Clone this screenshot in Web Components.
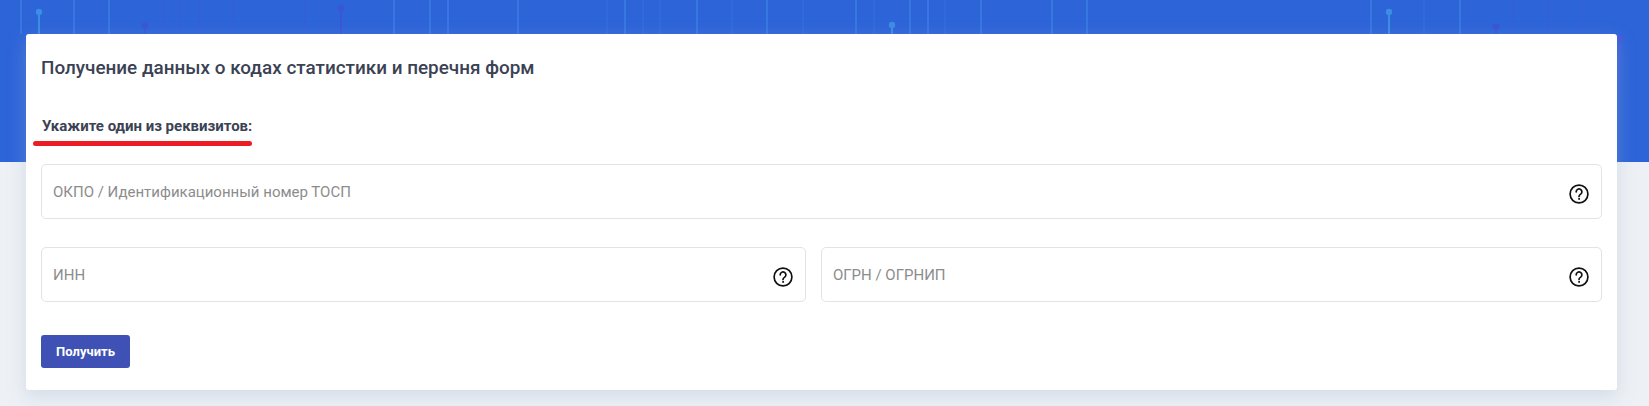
<!DOCTYPE html>
<html lang="ru">
<head>
<meta charset="utf-8">
<title>Получение данных</title>
<style>
  html, body { margin: 0; height: 100%; }
  body { background: #edf1f5; font-family: Roboto, "Liberation Sans", sans-serif; overflow: hidden; }
</style>
</head>
<body>
<stat-page>
  <hero-bg slot="bg"></hero-bg>
  <form-card heading="Получение данных о кодах статистики и перечня форм">
    <marked-label>Укажите один из реквизитов:</marked-label>
    <div slot="rows">
      <help-field>ОКПО / Идентификационный номер ТОСП</help-field>
    </div>
    <div slot="rows">
      <field-pair>
        <help-field>ИНН</help-field>
        <help-field>ОГРН / ОГРНИП</help-field>
      </field-pair>
    </div>
    <submit-button slot="actions">Получить</submit-button>
  </form-card>
</stat-page>

<script>
class StatPage extends HTMLElement {
  constructor() {
    super();
    const shadow = this.attachShadow({ mode: 'open' });
    shadow.innerHTML = `
      <style>
        :host { display: block; position: relative; height: 406px; }
        .content { position: relative; padding: 34px 32px 0 26px; }
      </style>
      <slot name="bg"></slot>
      <div class="content"><slot></slot></div>
    `;
  }
}

// decorative circuit lines behind the card
class HeroBg extends HTMLElement {
  constructor() {
    super();
    const shadow = this.attachShadow({ mode: 'open' });
    const bright = '#3777e0', faint = '#306bdb', purple = '#3360d9';
    const lines = [
      [21, bright], [74, bright], [109, bright], [163, purple], [180, purple], [199, purple],
      [234, purple], [305, purple], [394, bright], [430, bright], [448, bright],
      [518, bright], [607, faint], [625, bright], [643, faint], [660, faint], [697, bright],
      [732, faint], [767, bright], [803, faint], [856, bright], [874, faint], [910, bright],
      [928, bright], [945, faint], [981, bright], [1052, bright], [1087, bright],
      [1371, bright], [1424, faint], [1460, bright], [1514, purple], [1548, purple], [1584, purple]
    ];
    const dots = [[39, 12, '#3c8de4'], [145, 26, '#3a55d6'], [341, 8, '#3a55d6'],
      [892, 25, '#3c8de4'], [1389, 12, '#3c8de4'], [1496, 27, '#3a55d6']];
    const svg = lines.map(([x, c]) => `<rect x="${x - 1}" y="0" width="2" height="34" fill="${c}"/>`).join('')
      + dots.map(([x, y, c]) => `<rect x="${x - 1}" y="${y}" width="2" height="${34 - y}" fill="${c}"/><circle cx="${x}" cy="${y}" r="3.2" fill="${c}"/>`).join('');
    shadow.innerHTML = `
      <style>
        :host { display: block; position: absolute; left: 0; top: 0; right: 0; height: 162px; background: #2d64d8; overflow: hidden; }
        svg { display: block; filter: blur(.5px); }
      </style>
      <svg width="1649" height="162" viewBox="0 0 1649 162">
        <defs><linearGradient id="fade" x1="0" y1="0" x2="0" y2="1"><stop offset="0" stop-color="#4b55e0"/><stop offset="1" stop-color="#2d64d8"/></linearGradient></defs>
        ${svg}
        <rect x="1619" y="38" width="2" height="62" fill="url(#fade)"/>
        <circle cx="1620" cy="38" r="3" fill="#4b55e0"/>
      </svg>
    `;
  }
}

class FormCard extends HTMLElement {
  constructor() {
    super();
    const shadow = this.attachShadow({ mode: 'open' });
    shadow.innerHTML = `
      <style>
        :host {
          display: block;
          background: #fff;
          border-radius: 3px;
          padding: 19px 15px 22px;
          height: 356px;
          box-sizing: border-box;
          box-shadow: 0 6px 18px rgba(160,178,205,0.35);
        }
        h2 { margin: 0; font-size: 18.9px; line-height: 30px; font-weight: 500; color: #3b4254; }
        .label { margin-top: 31px; margin-bottom: 26px; }
        .rows { display: flex; flex-direction: column; gap: 28px; }
        .actions { margin-top: 33px; }
      </style>
      <h2></h2>
      <div class="label"><slot></slot></div>
      <div class="rows"><slot name="rows"></slot></div>
      <div class="actions"><slot name="actions"></slot></div>
    `;
    shadow.querySelector('h2').textContent = this.getAttribute('heading');
  }
}

class MarkedLabel extends HTMLElement {
  constructor() {
    super();
    const shadow = this.attachShadow({ mode: 'open' });
    shadow.innerHTML = `
      <style>
        :host { display: block; position: relative; padding-left: 1px; font-size: 15px; line-height: 24px; font-weight: 700; color: #3b4254; }
        .mark { position: absolute; left: -8px; top: 27px; width: 219px; height: 5px; border-radius: 3px; background: #ec1c24; }
      </style>
      <slot></slot>
      <span class="mark"></span>
    `;
  }
}

class HelpField extends HTMLElement {
  constructor() {
    super();
    const shadow = this.attachShadow({ mode: 'open' });
    shadow.innerHTML = `
      <style>
        :host {
          display: flex;
          align-items: center;
          justify-content: space-between;
          height: 55px;
          box-sizing: border-box;
          padding: 0 12px 0 11px;
          border: 1px solid #e2e3e5;
          border-radius: 5px;
          background: #fff;
          font-size: 15px;
          color: #8c8c8c;
        }
        svg { display: block; margin-top: 5px; }
      </style>
      <span><slot></slot></span>
      <svg width="20" height="20" viewBox="0 0 20 20" fill="none" stroke="#111" stroke-width="1.7" stroke-linecap="round">
        <circle cx="10" cy="10" r="8.9"/>
        <path d="M7.2 7.8a2.85 2.85 0 1 1 4.5 2.3c-1 .7-1.7 1.2-1.7 2.3"/>
        <circle cx="10" cy="14.9" r=".5" fill="#111" stroke-width="1"/>
      </svg>
    `;
  }
}

class FieldPair extends HTMLElement {
  constructor() {
    super();
    const shadow = this.attachShadow({ mode: 'open' });
    shadow.innerHTML = `
      <style>
        :host { display: grid; grid-template-columns: 49% 1fr; column-gap: 15px; }
      </style>
      <slot></slot>
    `;
  }
}

class SubmitButton extends HTMLElement {
  constructor() {
    super();
    const shadow = this.attachShadow({ mode: 'open' });
    shadow.innerHTML = `
      <style>
        :host { display: inline-block; }
        button {
          display: block;
          width: 89px;
          height: 33px;
          padding: 0;
          border: 0;
          border-radius: 3px;
          background: #3f51b5;
          color: #fff;
          font: 700 13px Roboto, "Liberation Sans", sans-serif;
        }
      </style>
      <button type="button"><slot></slot></button>
    `;
  }
}

customElements.define('stat-page', StatPage);
customElements.define('hero-bg', HeroBg);
customElements.define('form-card', FormCard);
customElements.define('marked-label', MarkedLabel);
customElements.define('help-field', HelpField);
customElements.define('field-pair', FieldPair);
customElements.define('submit-button', SubmitButton);
</script>
</body>
</html>
